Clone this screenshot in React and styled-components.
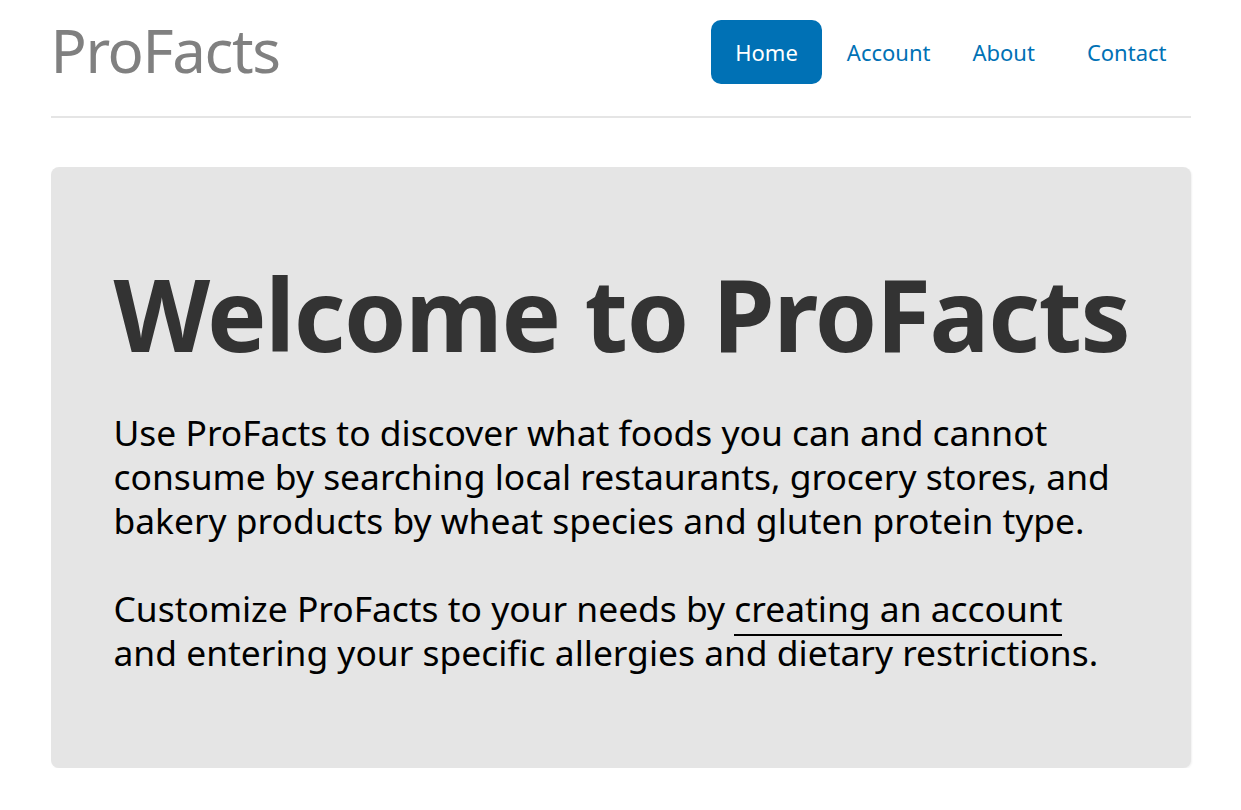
import React from "react";
import styled, { createGlobalStyle } from "styled-components";

const Global = createGlobalStyle`
  html, body { margin: 0; padding: 0; background: #fff; }
  body { font-family: "Noto Sans", "Open Sans", sans-serif; color: #000; }
  * { box-sizing: border-box; }
`;

const Container = styled.div`
  width: 1140px;
  margin: 0 auto;
  padding-top: 20px;
`;

const Header = styled.header`
  display: flex;
  align-items: center;
  justify-content: space-between;
  height: 98px;
  padding-bottom: 32px;
  border-bottom: 2px solid #e5e5e5;
`;

const Brand = styled.h3`
  margin: -4px 0 0 0;
  font-size: 60px;
  font-weight: 400;
  letter-spacing: -1.4px;
  color: #808080;
  line-height: 1;
`;

const Nav = styled.nav`
  display: flex;
  align-items: center;
  margin-right: 0;
`;

const NavLink = styled.a`
  display: flex;
  align-items: center;
  justify-content: center;
  height: 64px;
  padding: 0 24px;
  margin-left: ${(p) => p.$ml || 0}px;
  border-radius: 10px;
  font-size: 22px;
  text-decoration: none;
  color: ${(p) => (p.$active ? "#fff" : "#0071b5")};
  background: ${(p) => (p.$active ? "#0071b5" : "transparent")};
`;

const Jumbotron = styled.section`
  margin-top: 49px;
  background: #e5e5e5;
  border-radius: 8px;
  box-shadow: 1px 1px 2px rgba(0, 0, 0, 0.06);
  padding: 91px 76px 60px 63px;
  height: 601px;
`;

const Heading = styled.h1`
  margin: 0 0 42px 0;
  font-size: 100px;
  font-weight: 700;
  letter-spacing: -1.3px;
  color: #333;
  line-height: 110px;
  white-space: nowrap;
`;

const Lead = styled.p`
  margin: 0 0 44px 0;
  font-size: 35.4px;
  line-height: 44px;
  color: #000;
`;

const Link = styled.a`
  color: #000;
  text-decoration: none;
  border-bottom: 2px solid #000;
  padding-bottom: 2px;
`;

export default function App() {
  return (
    <>
      <Global />
      <Container>
        <Header>
          <Brand>ProFacts</Brand>
          <Nav>
            <NavLink $active href="#">Home</NavLink>
            <NavLink href="#" $ml={1}>Account</NavLink>
            <NavLink href="#" $ml={-6}>About</NavLink>
            <NavLink href="#" $ml={4}>Contact</NavLink>
          </Nav>
        </Header>
        <Jumbotron>
          <Heading>Welcome to ProFacts</Heading>
          <Lead>
            Use ProFacts to discover what foods you can and cannot consume by
            searching local restaurants, grocery stores, and bakery products by
            wheat species and gluten protein type.
          </Lead>
          <Lead>
            Customize ProFacts to your needs by <Link href="#">creating an account</Link>{" "}
            and entering your specific allergies and dietary restrictions.
          </Lead>
        </Jumbotron>
      </Container>
    </>
  );
}
